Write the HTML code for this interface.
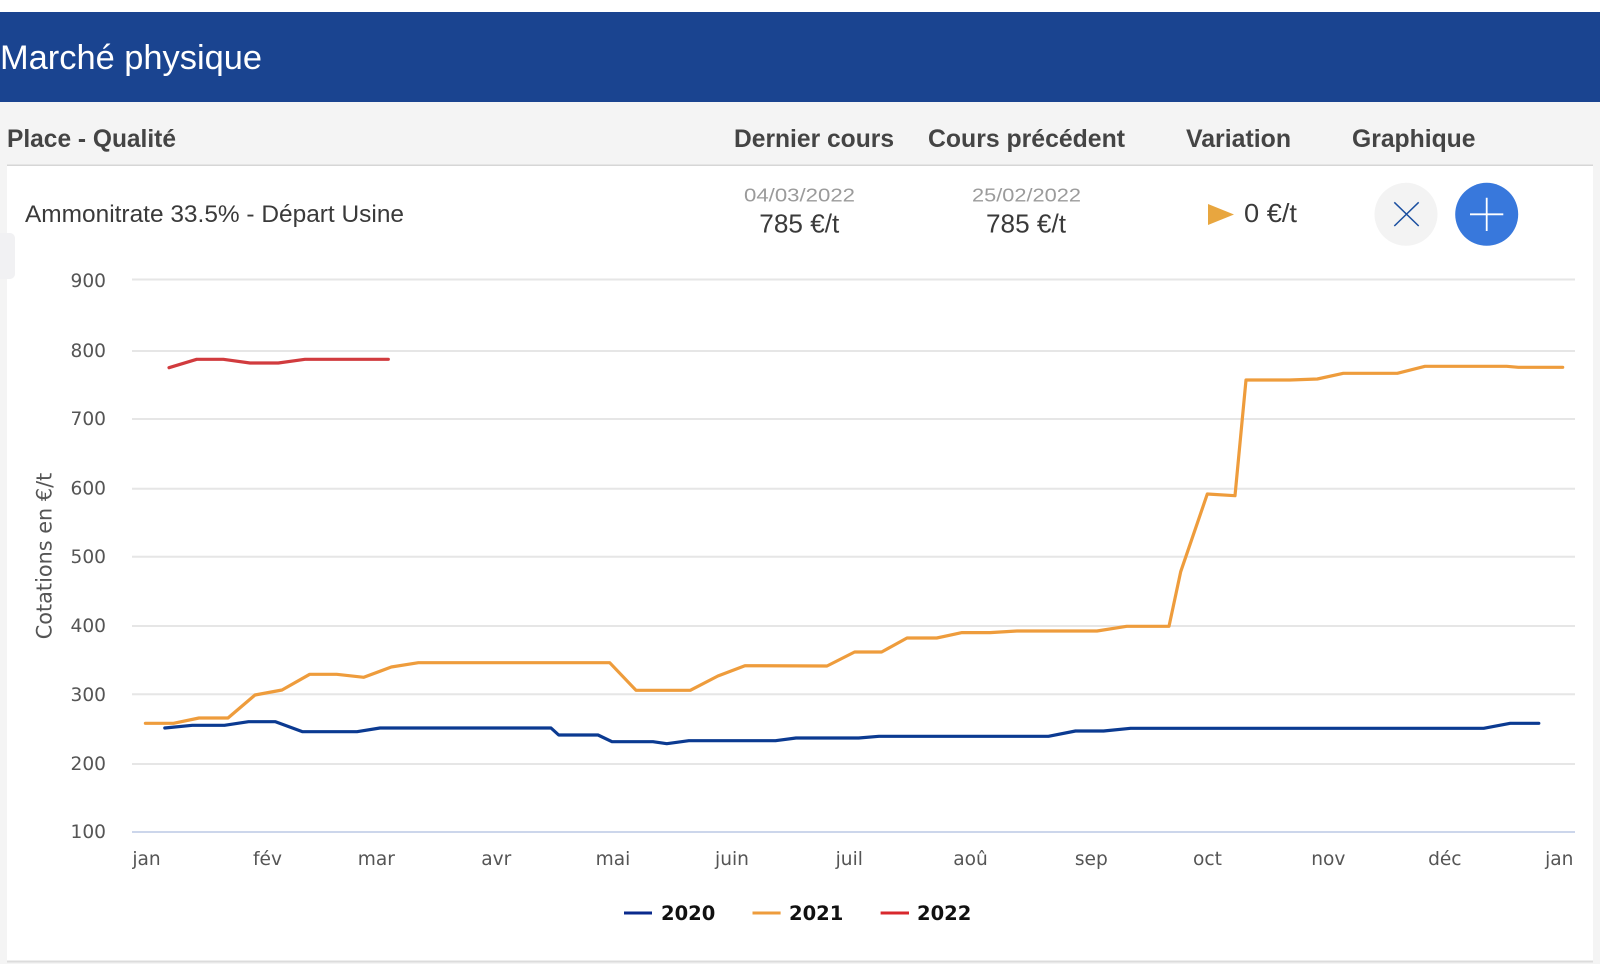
<!DOCTYPE html>
<html lang="fr"><head><meta charset="utf-8"><title>Marché physique</title>
<style>
html,body{margin:0;padding:0;width:1600px;height:964px;overflow:hidden;background:#f4f4f4}
svg{position:absolute;left:0;top:0;display:block}
.h{font:bold 24.6px "Liberation Sans",sans-serif;fill:#444}
.b{font:24.5px "Liberation Sans",sans-serif;fill:#3a3a3a}
.v{font:26px "Liberation Sans",sans-serif;fill:#3a3a3a}
.d{font:18.6px "Liberation Sans",sans-serif;fill:#9b9b9b}
.y{font:18.6px "DejaVu Sans",sans-serif;fill:#555;text-anchor:end}
.x{font:18.6px "DejaVu Sans",sans-serif;fill:#555;text-anchor:middle}
.l{font:bold 19.5px "DejaVu Sans",sans-serif;fill:#111}
.g{stroke:#e6e6e6;stroke-width:2;fill:none}
.s{fill:none;stroke-width:3.2;stroke-linejoin:round;stroke-linecap:round}
</style></head><body>
<svg width="1600" height="964" viewBox="0 0 1600 964" xmlns="http://www.w3.org/2000/svg">
<rect width="1600" height="12" fill="#fff"/>
<rect y="12" width="1600" height="90" fill="#1a4490"/>
<text x="0" y="69" font-family="'Liberation Sans',sans-serif" font-size="34.6" fill="#fff" textLength="262" lengthAdjust="spacingAndGlyphs">Marché physique</text>
<rect x="7" y="166" width="1586" height="795" fill="#fff"/>
<rect x="7" y="164.5" width="1586" height="1.5" fill="#d6d6d6"/>
<rect x="7" y="960.5" width="1586" height="2" fill="#dcdcdc"/>
<rect x="-8" y="233" width="23" height="46" rx="5" fill="#f1f1f3"/>

<text class="h" x="7" y="147" textLength="169" lengthAdjust="spacingAndGlyphs">Place - Qualité</text>
<text class="h" x="734" y="147" textLength="160" lengthAdjust="spacingAndGlyphs">Dernier cours</text>
<text class="h" x="928" y="147" textLength="197" lengthAdjust="spacingAndGlyphs">Cours précédent</text>
<text class="h" x="1186" y="147" textLength="105" lengthAdjust="spacingAndGlyphs">Variation</text>
<text class="h" x="1352" y="147" textLength="123.500" lengthAdjust="spacingAndGlyphs">Graphique</text>

<text class="b" x="25" y="222" textLength="379" lengthAdjust="spacingAndGlyphs">Ammonitrate 33.5% - Départ Usine</text>
<text class="d" x="744" y="201.500" textLength="111" lengthAdjust="spacingAndGlyphs">04/03/2022</text>
<text class="v" x="759.300" y="232.300" textLength="80" lengthAdjust="spacingAndGlyphs">785 €/t</text>
<text class="d" x="972" y="201.500" textLength="109" lengthAdjust="spacingAndGlyphs">25/02/2022</text>
<text class="v" x="986" y="232.300" textLength="80" lengthAdjust="spacingAndGlyphs">785 €/t</text>
<path d="M1208 204L1234 214.500L1208 225Z" fill="#e8a63f"/>
<text class="v" x="1244" y="222" textLength="53" lengthAdjust="spacingAndGlyphs">0 €/t</text>

<circle cx="1406" cy="214.300" r="31.500" fill="#f3f3f3"/>
<path d="M1394.300 202.300L1418.700 226M1418.700 202.300L1394.300 226" stroke="#1a4fa0" stroke-width="1.500" fill="none"/>
<circle cx="1486.700" cy="214.300" r="31.500" fill="#3878dc"/>
<path d="M1470 214.300H1503.300M1486.700 197.700V231" stroke="#fff" stroke-width="1.800" fill="none"/>

<path class="g" d="M132 279.500H1575M132 351H1575M132 419H1575M132 488.700H1575M132 556.700H1575M132 626H1575M132 694.300H1575M132 764H1575"/>
<path d="M132 832H1575" stroke="#ccd6eb" stroke-width="2" fill="none"/>

<g>
<text class="y" x="106" y="287">900</text>
<text class="y" x="106" y="357">800</text>
<text class="y" x="106" y="425">700</text>
<text class="y" x="106" y="494.500">600</text>
<text class="y" x="106" y="563">500</text>
<text class="y" x="106" y="632">400</text>
<text class="y" x="106" y="701">300</text>
<text class="y" x="106" y="770">200</text>
<text class="y" x="106" y="838">100</text>
</g>
<text transform="translate(51.500,556) rotate(-90)" text-anchor="middle" font-family="'DejaVu Sans',sans-serif" font-size="21" fill="#555" textLength="166.500" lengthAdjust="spacingAndGlyphs">Cotations en €/t</text>

<g>
<text class="x" x="146.500" y="865">jan</text>
<text class="x" x="267.500" y="865">fév</text>
<text class="x" x="376.300" y="865">mar</text>
<text class="x" x="496.300" y="865">avr</text>
<text class="x" x="613" y="865">mai</text>
<text class="x" x="732" y="865">juin</text>
<text class="x" x="849.300" y="865">juil</text>
<text class="x" x="970.500" y="865">aoû</text>
<text class="x" x="1091.300" y="865">sep</text>
<text class="x" x="1207.500" y="865">oct</text>
<text class="x" x="1328.300" y="865">nov</text>
<text class="x" x="1444.800" y="865">déc</text>
<text class="x" x="1559.300" y="865">jan</text>
</g>

<polyline class="s" stroke="#0b3a91" points="164.800,728 192.300,725.300 224.500,725.300 248.500,721.700 275.500,721.700 302.600,731.700 357,731.700 380,728 551,728 558.700,735 598,735 612,741.700 653,741.700 666.800,743.700 688.800,740.700 775.500,740.700 796,738 858.700,738 879,736.300 1048.500,736.300 1075.500,731 1103.600,731 1130.600,728.300 1483.700,728.300 1510.200,723.300 1538.800,723.300"/>
<polyline class="s" stroke="#ee9c3c" points="145.400,723.300 173.500,723.300 199,718 228,718 255,695 282,690 309.700,674.300 336.700,674.300 363.800,677.300 391.300,667 418.400,662.700 609.700,662.700 636,690.300 690.300,690.300 717.900,676 744.900,665.700 827,666 854.600,652 881.600,652 907,638 936.700,638 962,632.600 990,632.600 1017,631 1097,631 1126.700,626.300 1169,626.300 1180.700,571.700 1207.300,494 1235,495.700 1246,380 1290,380 1317.300,379 1343.300,373.300 1397.300,373.300 1425,366.300 1506.700,366.300 1518.300,367.300 1562.700,367.300"/>
<polyline class="s" stroke="#d13b3e" points="169,367.700 196.700,359.300 223.300,359.300 250,363 278.300,363 305,359.300 388.300,359.300"/>

<path d="M624 913H652" stroke="#0a2a8c" stroke-width="3" fill="none"/>
<text class="l" x="661" y="920">2020</text>
<path d="M752.500 913H780.600" stroke="#ee9c3c" stroke-width="3" fill="none"/>
<text class="l" x="789" y="920">2021</text>
<path d="M880.600 913H909" stroke="#d8282d" stroke-width="3" fill="none"/>
<text class="l" x="917" y="920">2022</text>
</svg>
</body></html>
